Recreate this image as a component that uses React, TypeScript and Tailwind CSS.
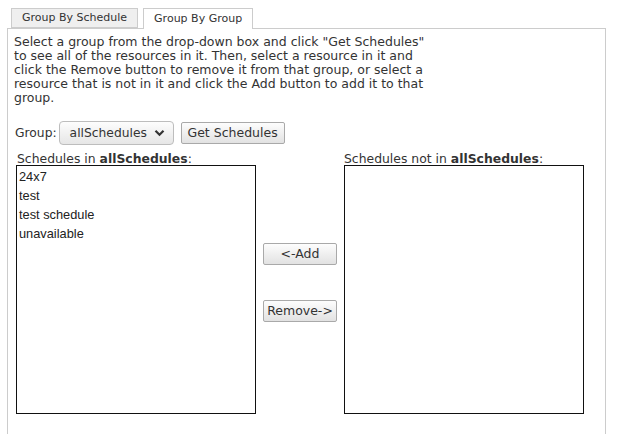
import React from "react";

const btn =
  "h-[22px] border border-[#a9a9a9] rounded-[2px] bg-gradient-to-b from-[#fdfdfd] to-[#e2e2e2] text-[12.5px] text-[#333] leading-[20px]";

export default function App() {
  const items = ["24x7", "test", "test schedule", "unavailable"];
  return (
    <div className="w-[617px] h-[434px] overflow-hidden bg-white text-[#333] font-['DejaVu_Sans',sans-serif]">
      <div className="flex items-start gap-[5px] pl-[11px] pt-[8px]">
        <div className="h-[20px] px-[10px] border border-[#cccccc] bg-[#efefef] text-[11px] leading-[18px] whitespace-nowrap">
          Group By Schedule
        </div>
        <div className="relative z-10 h-[21px] -mb-[1px] px-[10px] border border-b-0 border-[#cccccc] bg-white text-[11px] leading-[19px] whitespace-nowrap">
          Group By Group
        </div>
      </div>
      <div className="ml-[7px] w-[599px] h-[420px] border border-b-0 border-[#cccccc] pl-[6px] pt-[6px]">
        <p className="w-[416px] text-[12.5px] leading-[14.1px]">
          Select a group from the drop-down box and click "Get Schedules" to see all of the resources in it. Then, select a resource in it and click the Remove button to remove it from that group, or select a resource that is not in it and click the Add button to add it to that group.
        </p>
        <div className="mt-[16px] flex items-center h-[24px] text-[12.3px]">
          <span className="pl-[1px]">Group:</span>
          <div className="ml-[2px] h-[24px] w-[115px] flex items-center justify-between pl-[10px] pr-[8px] border border-[#bdbdbd] rounded-[4px] bg-gradient-to-b from-[#fdfdfd] to-[#e6e6e6]">
            <span>allSchedules</span>
            <svg width="11" height="8" viewBox="0 0 11 8">
              <path d="M1.5 1.8 L5.5 5.8 L9.5 1.8" fill="none" stroke="#333" strokeWidth="2.2" />
            </svg>
          </div>
          <button className={`${btn} ml-[7px] w-[104px]`}>Get Schedules</button>
        </div>
        <div className="mt-[7px] ml-[2px] flex text-[12.4px]">
          <div className="flex flex-col">
            <div className="pl-[1px] leading-[13px] h-[13px]">
              Schedules in <b>allSchedules</b>:
            </div>
            <div className="w-[240px] h-[249px] border border-[#111] font-['Liberation_Sans',Arial,sans-serif] text-[12.8px] text-[#222] pl-[2px] pt-[1px]">
              {items.map((i) => (
                <div key={i} className="h-[19px] leading-[19px]">
                  {i}
                </div>
              ))}
            </div>
          </div>
          <div className="w-[88px] flex flex-col items-center pt-[91px] gap-[35px]">
            <button className={`${btn} w-[74px]`}>&lt;-Add</button>
            <button className={`${btn} w-[74px]`}>Remove-&gt;</button>
          </div>
          <div className="flex flex-col">
            <div className="leading-[13px] h-[13px]">
              Schedules not in <b>allSchedules</b>:
            </div>
            <div className="w-[240px] h-[249px] border border-[#111]" />
          </div>
        </div>
      </div>
    </div>
  );
}
